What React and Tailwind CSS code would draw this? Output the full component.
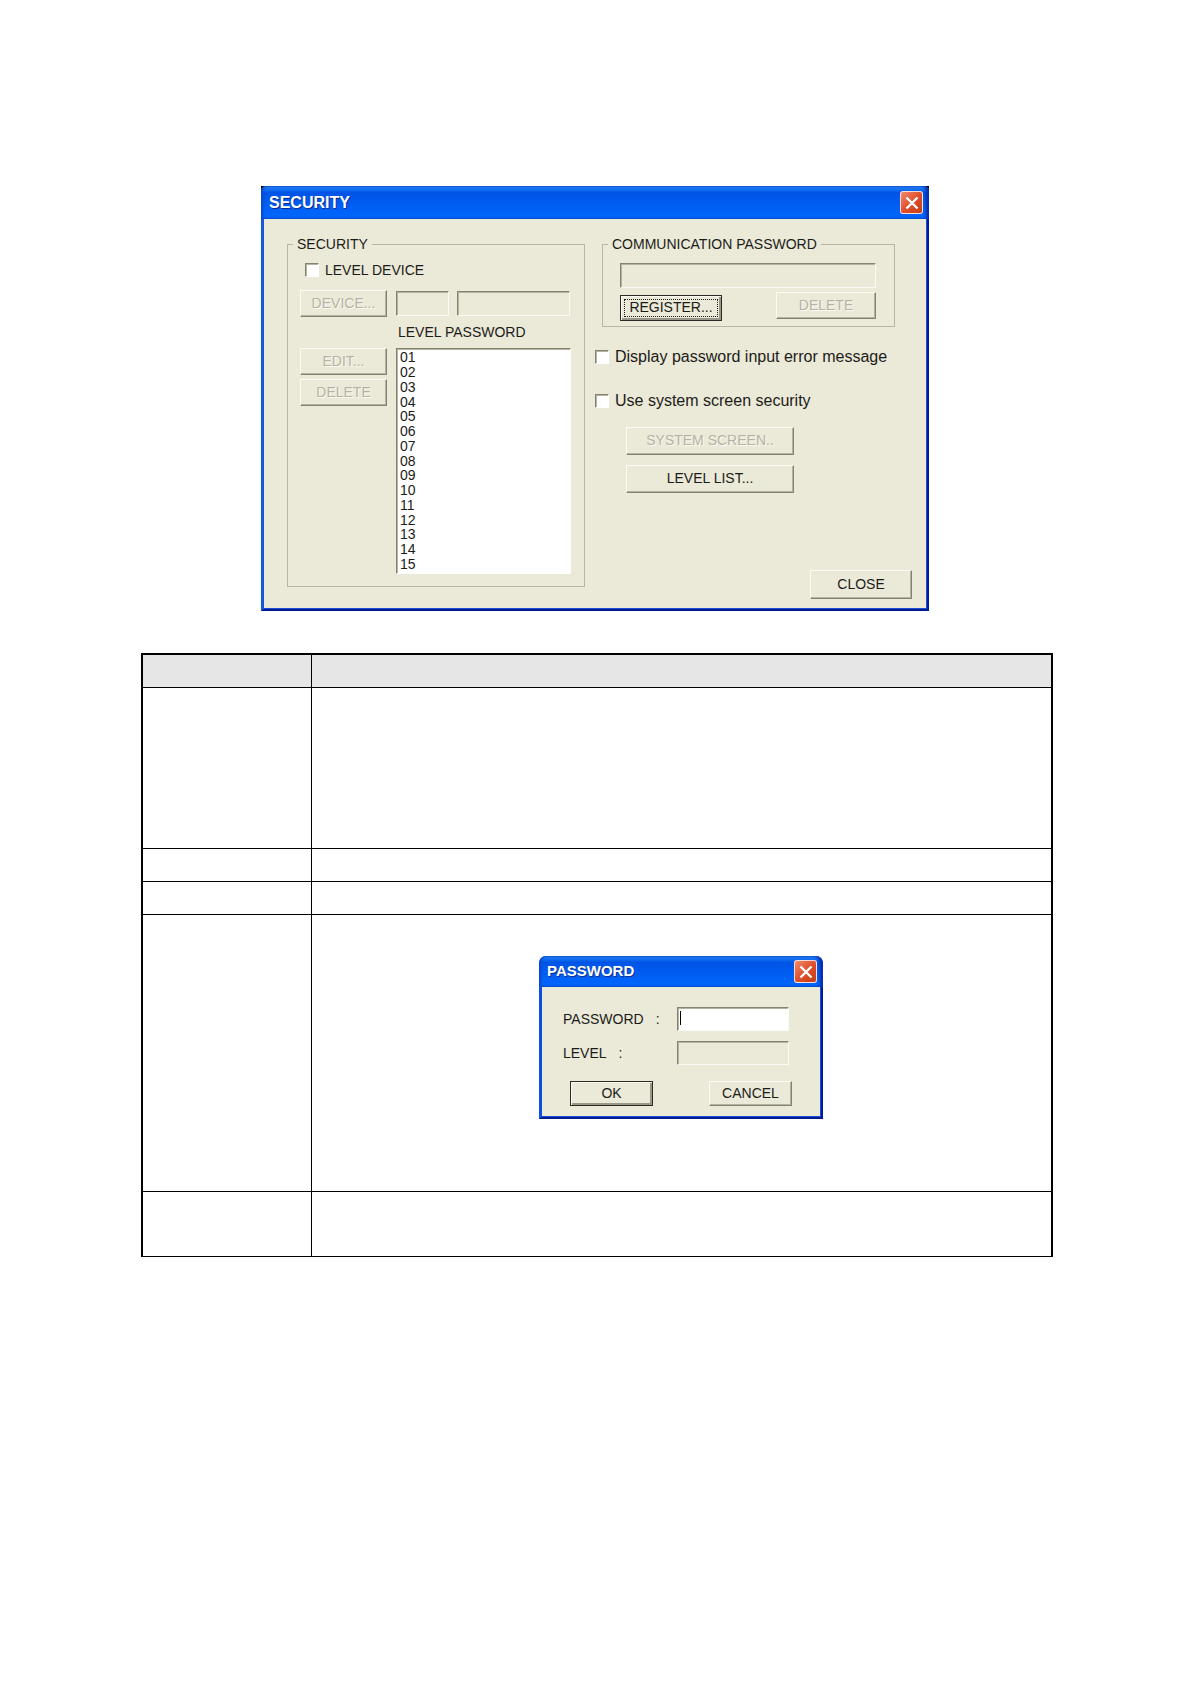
const buttonKinds = {
  normal:
    "border border-t-[#fbfaf4] border-l-[#fbfaf4] border-r-[#85826f] border-b-[#85826f] shadow-[inset_-1px_-1px_0_#b5b2a0] text-[#1c1c18]",
  disabled:
    "border border-t-[#fbfaf4] border-l-[#fbfaf4] border-r-[#85826f] border-b-[#85826f] shadow-[inset_-1px_-1px_0_#b5b2a0] text-[#b6b3a3] [text-shadow:1px_1px_0_#fbfaf4]",
  primary:
    "border border-[#2a2a22] shadow-[inset_1px_1px_0_#fbfaf4,inset_-2px_-2px_0_#99968a] text-[#1c1c18]",
};

function DialogButton({ kind = "normal", className = "", children }) {
  return (
    <button
      type="button"
      disabled={kind === "disabled"}
      className={`flex items-center justify-center bg-[#ebe9d8] text-[14px] leading-5 ${buttonKinds[kind]} ${className}`}
    >
      {children}
    </button>
  );
}

function TextBox({ className = "", ...props }) {
  return (
    <input
      type="text"
      className={`border border-t-[#85826f] border-l-[#85826f] border-r-[#fbfaf4] border-b-[#fbfaf4] shadow-[inset_1px_1px_0_#b5b2a0] px-1 text-[14px] outline-none ${className}`}
      {...props}
    />
  );
}

function CheckBox({ id, label, className = "", textClass = "" }) {
  return (
    <div className={`flex h-5 items-center gap-[6px] ${className}`}>
      <input
        id={id}
        type="checkbox"
        className="size-[14px] appearance-none border border-t-[#85826f] border-l-[#85826f] border-r-white border-b-white bg-white shadow-[inset_1px_1px_0_#b5b2a0]"
      />
      <label htmlFor={id} className={`whitespace-nowrap leading-5 ${textClass}`}>
        {label}
      </label>
    </div>
  );
}

function TitleBar({ title, className = "" }) {
  return (
    <div
      className={`flex items-center justify-between bg-linear-to-b from-[#2b8bfb] via-[#0054e6] via-20% to-[#0168ff] shadow-[inset_2px_0_2px_#0a48cc,inset_-3px_0_3px_#0a2ca8] ${className}`}
    >
      <h2 className="font-bold text-white [text-shadow:1px_1px_0_#0a2a8c]">{title}</h2>
      <button
        type="button"
        aria-label="Close"
        className="flex size-[23px] items-center justify-center rounded-[3px] border border-white/80 bg-linear-to-br from-[#ee8a6c] via-[#e0502c] to-[#c63c14]"
      >
        <svg viewBox="0 0 14 14" className="size-[14px]" fill="none" stroke="#fff" strokeWidth="2.4">
          <path d="M1.5 1.5 L12.5 12.5 M12.5 1.5 L1.5 12.5" />
        </svg>
      </button>
    </div>
  );
}

function Group({ title, className = "", children }) {
  return (
    <fieldset className={`min-w-0 border border-[#b8b5a5] ${className}`}>
      <legend className="ml-[5px] px-1 text-[14px] leading-5">{title}</legend>
      {children}
    </fieldset>
  );
}

const levels = ["01", "02", "03", "04", "05", "06", "07", "08", "09", "10", "11", "12", "13", "14", "15"];

function SecurityDialog() {
  return (
    <section className="mx-auto w-full max-w-[668px] bg-black">
      <TitleBar title="SECURITY" className="h-[33px] rounded-t-[5px] pl-2 pr-[6px] text-[16px]" />
      <div className="flex border-r-2 border-b-2 border-l-3 border-l-[#1459d8] border-r-[#001a94] border-b-[#001a94] bg-[#ebe9d8] pt-[15px] pr-[15px] pb-[10px] pl-[23px] shadow-[inset_-1px_-1px_0_#1450d8]">
        <Group title="SECURITY" className="w-[298px] self-start pb-3">
          <CheckBox id="level-device" label="LEVEL DEVICE" className="mt-[6px] ml-[17px]" textClass="text-[14px]" />
          <div className="mt-[10px] ml-3 flex items-center">
            <DialogButton kind="disabled" className="h-[27px] w-[87px] pb-[2px]">
              DEVICE...
            </DialogButton>
            <TextBox aria-label="Device type" disabled className="ml-[9px] h-[25px] w-[53px]" />
            <TextBox aria-label="Device address" disabled className="ml-2 h-[25px] w-[113px]" />
          </div>
          <div className="mt-[5px] ml-3 flex gap-[9px]">
            <div className="flex flex-col gap-1 pt-[26px]">
              <DialogButton kind="disabled" className="h-[27px] w-[87px] pb-[2px]">
                EDIT...
              </DialogButton>
              <DialogButton kind="disabled" className="h-[27px] w-[87px] pb-[2px]">
                DELETE
              </DialogButton>
            </div>
            <div className="flex flex-col gap-[6px]">
              <label htmlFor="level-password" className="pl-[2px] text-[14px] leading-5">
                LEVEL PASSWORD
              </label>
              <select
                id="level-password"
                size={15}
                className="h-[226px] w-[175px] appearance-none overflow-hidden border border-t-[#85826f] border-l-[#85826f] border-r-white border-b-white bg-white text-[14px] shadow-[inset_1px_1px_0_#b5b2a0] outline-none"
              >
                {levels.map((level) => (
                  <option
                    key={level}
                    className="h-[15px] min-h-0 py-0 pr-0 pl-[3px] leading-[15px] nth-[4n]:h-[14px]"
                  >
                    {level}
                  </option>
                ))}
              </select>
            </div>
          </div>
        </Group>

        <div className="ml-[10px] flex flex-1 flex-col">
          <Group title="COMMUNICATION PASSWORD" className="mr-[17px] ml-[7px] pb-[5px]">
            <div className="mt-[9px] mr-[18px] ml-[17px]">
              <TextBox aria-label="Communication password" disabled className="block h-[25px] w-full" />
              <div className="mt-1 flex items-start justify-between">
                <DialogButton kind="primary" className="mt-[3px] h-[26px] w-[102px] p-[3px]">
                  <span className="flex h-full w-full items-center justify-center border border-dotted border-[#1c1c18] pb-[2px]">
                    REGISTER...
                  </span>
                </DialogButton>
                <DialogButton kind="disabled" className="h-[27px] w-[100px] pb-[2px]">
                  DELETE
                </DialogButton>
              </div>
            </div>
          </Group>
          <CheckBox
            id="display-error"
            label="Display password input error message"
            className="mt-5"
            textClass="text-[16px]"
          />
          <CheckBox
            id="system-security"
            label="Use system screen security"
            className="mt-6"
            textClass="text-[16px]"
          />
          <DialogButton kind="disabled" className="mt-4 ml-[31px] h-7 w-[168px] pb-[2px]">
            SYSTEM SCREEN..
          </DialogButton>
          <DialogButton className="mt-[10px] ml-[31px] h-7 w-[168px] pb-[2px]">LEVEL LIST...</DialogButton>
          <DialogButton className="mt-[77px] h-[29px] w-[102px] self-end pb-[2px]">CLOSE</DialogButton>
        </div>
      </div>
    </section>
  );
}

function PasswordDialog() {
  return (
    <section className="mx-auto w-full max-w-[284px]">
      <TitleBar title="PASSWORD" className="h-[31px] rounded-t-[7px] pl-2 pr-[6px] text-[15px]" />
      <div className="border-r-2 border-b-2 border-l-3 border-l-[#0a50dc] border-r-[#001a94] border-b-[#001a94] bg-[#ebe9d8] pt-5 pb-[11px] pl-[21px] shadow-[inset_-1px_-1px_0_#1450d8]">
        <div className="flex h-6 items-center">
          <label htmlFor="password" className="flex w-[114px] gap-3 text-[14px] leading-5">
            PASSWORD <span>:</span>
          </label>
          <div className="relative">
            <TextBox id="password" className="block h-6 w-[112px] bg-white" />
            <span className="absolute top-1 left-[3px] h-[14px] w-px bg-black" />
          </div>
        </div>
        <div className="mt-[10px] flex h-6 items-center">
          <label htmlFor="level" className="flex w-[114px] gap-3 text-[14px] leading-5">
            LEVEL <span>:</span>
          </label>
          <TextBox id="level" disabled className="h-6 w-[112px]" />
        </div>
        <div className="mt-4 ml-[7px] flex gap-14">
          <DialogButton kind="primary" className="h-[25px] w-[83px] pb-[2px]">
            OK
          </DialogButton>
          <DialogButton className="h-[25px] w-[83px] pb-[2px]">CANCEL</DialogButton>
        </div>
      </div>
    </section>
  );
}

const rows = [
  { height: "h-[161px]" },
  { height: "h-[33px]" },
  { height: "h-[33px]" },
  { height: "h-[277px]", content: <PasswordDialog /> },
  { height: "h-[65px]" },
];

export default function App() {
  return (
    <main className="min-h-screen bg-white pt-[186px] font-['Liberation_Sans',Arial,sans-serif] text-[#1c1c18]">
      <div className="pr-px">
        <SecurityDialog />
      </div>
      <div className="mt-[42px] pr-[138px] pl-[141px]">
        <table className="w-full table-fixed border-separate border-spacing-0 border-x-2 border-t-2 border-black">
          <colgroup>
            <col className="w-[169px]" />
            <col />
          </colgroup>
          <thead>
            <tr className="h-[33px] bg-[#e6e6e6]">
              <th className="border-r border-b border-black p-0" />
              <th className="border-b border-black p-0" />
            </tr>
          </thead>
          <tbody>
            {rows.map((row, i) => (
              <tr key={i} className={row.height}>
                <td className="border-r border-b border-black p-0" />
                <td className={`border-b border-black pr-px pb-0 pl-0 align-top ${row.content ? "pt-[41px]" : "pt-0"}`}>
                  {row.content}
                </td>
              </tr>
            ))}
          </tbody>
        </table>
      </div>
    </main>
  );
}
